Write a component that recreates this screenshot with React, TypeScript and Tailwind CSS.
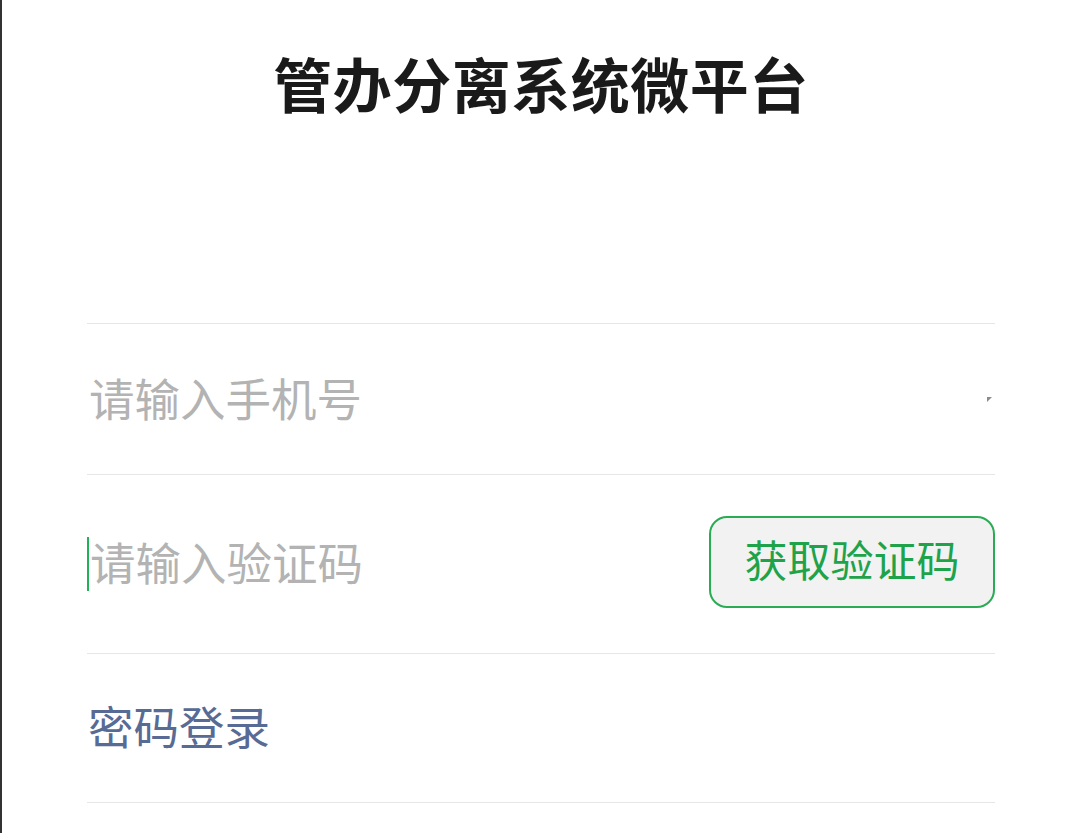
import React, { useState } from 'react';

const font = { fontFamily: '"Noto Sans CJK SC", "Noto Sans", sans-serif' };

export default function App() {
  const [phone, setPhone] = useState('');
  const [code, setCode] = useState('');

  return (
    <div className="min-h-[833px] w-[1080px] bg-white border-l-2 border-[#333333]" style={font}>
      <div className="h-[323px] pt-[40px] flex justify-center">
        <h1 className="text-[59px] leading-[86px] font-bold text-[#1a1a1a] tracking-[0.5px]">管办分离系统微平台</h1>
      </div>

      <div className="ml-[85px] mr-[85px]">
        <div className="h-[151px] border-t border-[#e6e6e6] flex items-center relative">
          <input
            value={phone}
            onChange={e => setPhone(e.target.value)}
            placeholder="请输入手机号"
            className="w-full bg-transparent outline-none text-[45.5px] leading-[60px] text-[#333] placeholder:text-[#b3b3b3] pl-[2px] mt-[-5px]"
          />
          <span className="absolute right-[3px] top-[73px] w-0 h-0 border-t-[5px] border-r-[5px] border-t-[#8a8a8a] border-r-transparent" />
        </div>

        <div className="h-[179px] border-t border-[#e6e6e6] flex items-center justify-between">
          <div className="flex items-center flex-1">
            <span className="w-[2px] h-[54px] bg-[#20b15a]" />
            <input
              value={code}
              onChange={e => setCode(e.target.value)}
              placeholder="请输入验证码"
              className="flex-1 bg-transparent outline-none text-[45.5px] leading-[60px] text-[#333] placeholder:text-[#b3b3b3] pl-[1px] mt-[-6px]"
            />
          </div>
          <button className="w-[286px] h-[92px] rounded-[18px] border-2 border-[#2aac54] bg-[#f2f2f2] text-[#1ea34a] text-[43px] leading-none flex items-center justify-center mt-[-5px] pb-[6px]">
            获取验证码
          </button>
        </div>

        <div className="h-[150px] border-t border-b border-[#e6e6e6] flex items-center">
          <span className="text-[45.5px] leading-[60px] text-[#576b95] pl-[1px] mt-[-6px]">密码登录</span>
        </div>
      </div>
    </div>
  );
}
